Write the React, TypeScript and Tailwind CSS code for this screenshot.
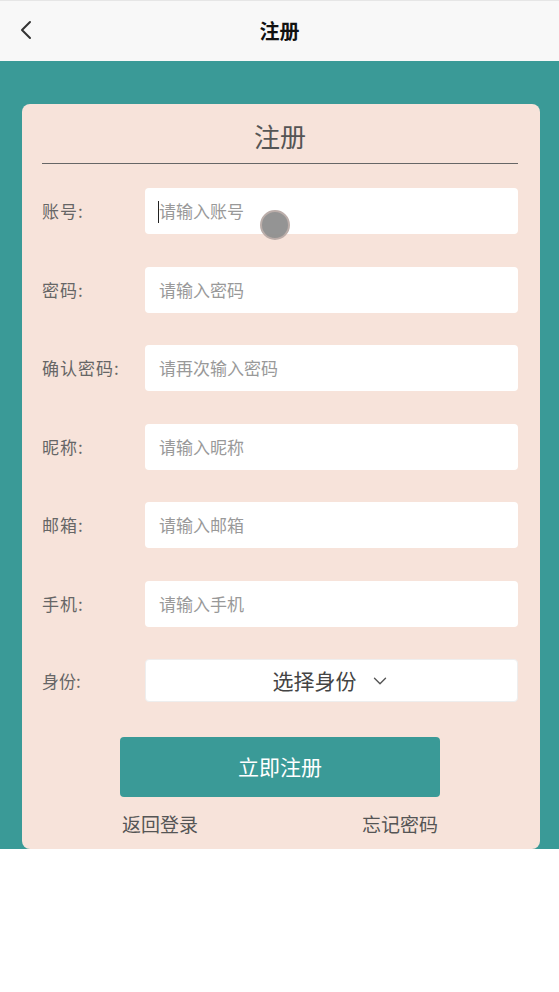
import { ChevronDown, ChevronLeft } from 'lucide-react';

const fields = [
  { label: '账号:', placeholder: '请输入账号' },
  { label: '密码:', placeholder: '请输入密码' },
  { label: '确认密码:', placeholder: '请再次输入密码' },
  { label: '昵称:', placeholder: '请输入昵称' },
  { label: '邮箱:', placeholder: '请输入邮箱' },
  { label: '手机:', placeholder: '请输入手机' },
];

export default function App() {
  return (
    <div
      className="w-[559px] h-[992px] bg-white relative"
      style={{ fontFamily: '"Noto Sans CJK SC", "Liberation Sans", sans-serif' }}
    >
      {/* Header */}
      <div className="h-[61px] bg-[#f8f8f8] border-t border-[#e6e6e6] flex items-center relative">
        <ChevronLeft className="absolute left-[10px] top-[13px] w-[32px] h-[32px] text-[#333]" strokeWidth={1.5} />
        <div className="flex-1 text-center text-[20px] font-bold text-[#111]">注册</div>
      </div>

      {/* Teal section */}
      <div className="bg-[#3a9a97] pt-[43px] pl-[22px] pr-[19px]">
        <div className="bg-[#f7e3da] rounded-[8px] pl-[20px] pr-[22px] pt-[13px] pb-[11px]">
          <div className="text-center text-[26px] text-[#555] leading-[38px]">注册</div>
          <div className="h-px bg-[#666] mt-[8px] mb-[24px]" />

          <div className="flex flex-col gap-[32.5px]">
            {fields.map((f, i) => (
              <div key={f.label} className="flex items-center">
                <div className="w-[103px] text-[17px] text-[#666] tracking-[1px]">{f.label}</div>
                <div className="flex-1 h-[46px] bg-white rounded-[4px] flex items-center pl-[14px] relative">
                  {i === 0 && <span className="absolute left-[13px] top-[13px] w-px h-[22px] bg-[#222]" />}
                  <span className="text-[17px] text-[#999]">{f.placeholder}</span>
                </div>
              </div>
            ))}
            <div className="flex items-center">
              <div className="w-[103px] text-[17px] text-[#666]">身份:</div>
              <div className="flex-1 h-[43px] bg-white rounded-[4px] border border-[#eee] flex items-center justify-center gap-[12px]">
                <span className="text-[21px] text-[#444]">选择身份</span>
                <ChevronDown className="w-[22px] h-[22px] text-[#555]" strokeWidth={1.5} />
              </div>
            </div>
          </div>

          <div className="flex justify-center mt-[35px]">
            <div className="w-[320px] h-[60px] bg-[#3a9a97] rounded-[4px] flex items-center justify-center text-white text-[21px]">
              立即注册
            </div>
          </div>
          <div className="flex justify-between px-[80px] mt-[13px] text-[19px] text-[#555] leading-[28px]">
            <span>返回登录</span>
            <span>忘记密码</span>
          </div>
        </div>
      </div>

      {/* touch indicator */}
      <div className="absolute left-[260px] top-[210px] w-[30px] h-[30px] rounded-full bg-[#8f8f8f] border-2 border-[#b8aaa6] opacity-95" />
    </div>
  );
}
